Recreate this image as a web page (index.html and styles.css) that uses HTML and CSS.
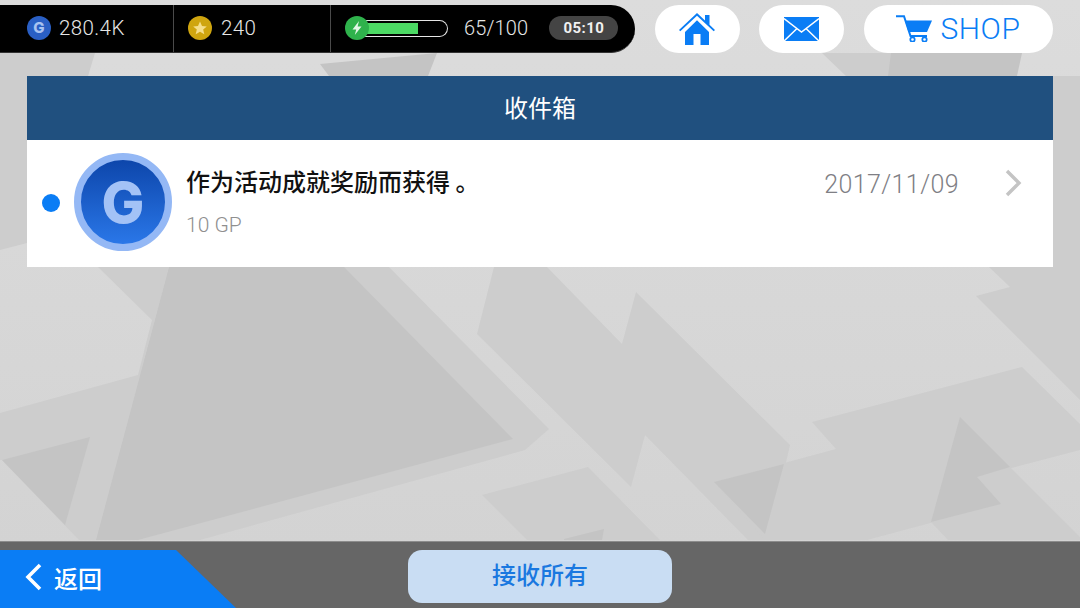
FILE: index.html
```html
<!DOCTYPE html>
<html lang="zh">
<head>
<meta charset="utf-8">
<title>收件箱</title>
<link rel="stylesheet" href="styles.css">
</head>
<body>
<div class="screen">
  <svg class="bg" viewBox="0 0 1080 608" aria-hidden="true">
    <defs>
      <linearGradient id="base" x1="0" y1="0" x2="0" y2="1">
        <stop offset="0" stop-color="#dcdcdc"/>
        <stop offset="1" stop-color="#d2d2d2"/>
      </linearGradient>
    </defs>
    <rect width="1080" height="608" fill="url(#base)"/>
    <g fill="#cdcdcd">
      <polygon points="98,267 169,267 96,540 79,540 2,460 0,460 0,413 138,375 152,320"/>
      <polygon points="389,267 549,429 525,450 200,540 96,540 169,267"/>
      <polygon points="494,267 547,267 622,344 636,292 790,445 768,540 748,540 645,435 631,487 477,334"/>
      <polygon points="482,495 588,467 660,540 527,540"/>
      <polygon points="714,482 836,449 812,422 1022,367 1080,424 1080,450 977,477 1001,504 867,540 765,540"/>
      <polygon points="960,417 1080,537 1080,540 948,540 931,522"/>
      <polygon points="989,267 1080,267 1080,400 976,296 1010,287"/>
      <polygon points="0,53 95,53 88,76 0,76"/>
      <polygon points="822,53 930,53 910,76 846,76"/>
      <polygon points="0,76 27,76 27,243 0,250"/>
      <polygon points="1053,76 1080,76 1080,267 1053,267"/>
    </g>
    <g fill="#c4c4c4">
      <polygon points="169,267 344,267 513,439 138,540 96,540"/>
      <polygon points="2,460 90,437 65,525"/>
      <polygon points="714,482 784,464 765,534"/>
      <polygon points="960,417 1010,467 977,477 1001,504 931,522"/>
      <polygon points="564,539 604,529 602,540 564,540"/>
      <polygon points="320,64 437,53 428,76 329,76"/>
      <polygon points="891,53 1022,53 1017,76 888,76"/>
    </g>
  </svg>

  <header class="topbar">
    <div class="status">
      <div class="cell cell-gold">
        <span class="coin coin-g">G</span>
        <span class="amount">280.4K</span>
      </div>
      <div class="cell cell-star">
        <svg class="coin-svg" viewBox="0 0 24 24" aria-hidden="true">
          <circle cx="12" cy="12" r="12" fill="#cfa50f"/>
          <polygon points="12,5.5 14,10 18.8,10.4 15.2,13.500 16.300,18.300 12,15.800 7.700,18.300 8.800,13.500 5.200,10.400 10,10" fill="#f5de8a"/>
        </svg>
        <span class="amount">240</span>
      </div>
      <div class="cell cell-energy">
        <div class="energy">
          <div class="energy-track"><div class="energy-fill" style="width:67%"></div></div>
          <svg class="bolt" viewBox="0 0 24 24" aria-hidden="true">
            <circle cx="12" cy="12" r="12" fill="#2fb24c"/>
            <polygon points="14,5 7.500,13.500 11.200,13.500 9.800,19 16.500,10.500 12.600,10.500" fill="#e4f7e8"/>
          </svg>
        </div>
        <span class="amount energy-num">65/100</span>
        <span class="timer">05:10</span>
      </div>
    </div>
    <button class="pill pill-icon">
      <svg class="ico-home" viewBox="0 0 36 32" aria-hidden="true">
        <path d="M0 17 18 0l8 7.500V2h4.500v9.800L36 17l-1.300 1.300L18 2.700 1.300 18.300Z" fill="#0a7df5"/>
        <path d="M6 19 18 7.300 30 19v13H21.500V21h-7v11H6Z" fill="#0a7df5"/>
      </svg>
    </button>
    <button class="pill pill-icon">
      <svg class="ico-mail" viewBox="0 0 35 24" aria-hidden="true">
        <rect width="35" height="24" fill="#0a7df5"/>
        <path d="M0 1.500 17.500 15 35 1.500M0 24 13 11.500M35 24 22 11.500" fill="none" stroke="#fff" stroke-width="1.500"/>
      </svg>
    </button>
    <button class="pill pill-shop">
      <svg class="ico-cart" viewBox="0 0 36 27" aria-hidden="true">
        <path d="M0 1.200H8L14.500 21H31" fill="none" stroke="#0a7df5" stroke-width="2"/>
        <path d="M9 5.500H36L31 17H12.500Z" fill="#0a7df5"/>
        <circle cx="16.500" cy="24.500" r="2.200" fill="none" stroke="#0a7df5" stroke-width="1.700"/>
        <circle cx="28.500" cy="24.500" r="2.200" fill="none" stroke="#0a7df5" stroke-width="1.700"/>
      </svg>
      <span>SHOP</span>
    </button>
  </header>

  <main class="inbox">
    <h1 class="inbox-title">收件箱</h1>
    <article class="message">
      <span class="dot"></span>
      <div class="avatar"><span>G</span></div>
      <div class="message-body">
        <p class="message-title">作为活动成就奖励而获得 。</p>
        <p class="message-sub">10 GP</p>
      </div>
      <time class="message-date">2017/11/09</time>
      <svg class="chevron" viewBox="0 0 18 28" aria-hidden="true">
        <path d="M3 2 15 14 3 26" fill="none" stroke="#c4c4c4" stroke-width="3.400"/>
      </svg>
    </article>
  </main>

  <footer class="bottombar">
    <button class="back">
      <svg class="back-arrow" viewBox="0 0 18 28" aria-hidden="true">
        <path d="M15 2 3 14l12 12" fill="none" stroke="#fff" stroke-width="3.600"/>
      </svg>
      <span>返回</span>
    </button>
    <button class="receive">接收所有</button>
  </footer>
</div>
</body>
</html>
```
FILE: styles.css
```css
* { box-sizing: border-box; }
html, body { margin: 0; padding: 0; }
body {
  width: 1080px;
  height: 608px;
  overflow: hidden;
  font-family: "Noto Sans CJK SC", "Liberation Sans", sans-serif;
}
p, h1 { margin: 0; font-weight: normal; }
button { border: 0; padding: 0; font: inherit; }

.screen {
  position: relative;
  width: 1080px;
  height: 608px;
  background: #d6d6d6;
  display: flex;
  flex-direction: column;
}
.bg { position: absolute; inset: 0; width: 1080px; height: 608px; }

.topbar {
  position: relative;
  height: 48px;
  margin-top: 4.500px;
  display: flex;
  align-items: stretch;
}
.status {
  width: 635px;
  background: #000;
  border-radius: 0 24px 24px 0;
  border-bottom: 1px solid #333;
  display: flex;
  color: #e6e6e6;
}
.cell {
  display: flex;
  align-items: center;
  border-right: 1px solid #4a4a4a;
}
.cell-gold { width: 174px; padding-left: 27px; gap: 8px; }
.cell-star { width: 157px; padding-left: 14px; gap: 9px; }
.cell-energy { border-right: 0; padding-left: 14px; }
.amount { font-family: "Roboto", sans-serif; font-size: 20.500px; font-weight: 300; letter-spacing: .4px; }
.coin {
  width: 24px; height: 24px; border-radius: 50%;
  background: #2a5fc4; color: #a9c3f0;
  font: 800 15px/24px "Inter", sans-serif; text-align: center;
}
.coin-svg { width: 24px; height: 24px; }
.energy { position: relative; width: 103px; height: 24px; display: flex; align-items: center; }
.energy-track {
  margin-left: 13px; width: 90px; height: 17px;
  border: 1.500px solid #e6e6e6; border-left: 0;
  border-radius: 0 8.500px 8.500px 0;
  padding: 2px 0;
}
.energy-fill { height: 100%; background: #4cd964; }
.bolt { position: absolute; left: 0; top: 0; width: 24px; height: 24px; }
.energy-num { margin-left: 16px; font-size: 20px; letter-spacing: .15px; }
.timer {
  margin-left: 21px; width: 69px; height: 24px; border-radius: 12px;
  background: #444; color: #f0f0f0;
  font: bold 15px/24px "Roboto", sans-serif; text-align: center; letter-spacing: .4px;
}

.pill {
  background: #fff;
  border-radius: 24px;
  display: flex; align-items: center; justify-content: center;
}
.pill-icon { width: 85px; margin-left: 20px; }
.pill-icon + .pill-icon { margin-left: 19px; }
.pill-shop {
  width: 189px; margin-left: 20px; gap: 8px;
  color: #0a7df5; font-family: "Roboto", sans-serif; font-size: 30px; font-weight: 300; letter-spacing: .6px;
}
.ico-home { width: 36px; height: 32px; margin-right: 1px; }
.ico-mail { width: 35px; height: 24px; }
.ico-cart { width: 36px; height: 27px; }

.inbox {
  position: relative;
  margin: 23.500px 27px 0;
  flex: 1;
}
.inbox-title {
  height: 64px;
  padding-bottom: 3px;
  background: #20507f;
  color: #fff;
  font-size: 24px;
  font-weight: 400;
  line-height: 61px;
  text-align: center;
}
.message {
  height: 127px;
  background: #fff;
  display: flex;
  align-items: flex-start;
}
.dot {
  width: 18px; height: 18px; border-radius: 50%;
  background: #0a7df5;
  margin: 54px 0 0 15px;
}
.avatar {
  width: 98px; height: 98px; border-radius: 50%;
  margin: 13px 0 0 14px;
  border: 7px solid #94b8f5;
  background: linear-gradient(#0d46ab, #2a77e8);
  display: flex; align-items: center; justify-content: center;
  color: #a3c2f6;
  font: 800 57px/1 "Inter", sans-serif;
}
.message-body { margin: 24px 0 0 14px; flex: 1; }
.message-title { font-size: 24px; font-weight: 500; line-height: 34px; color: #111; }
.message-sub { font-family: "Roboto", sans-serif; font-weight: 300; font-size: 21px; line-height: 28px; margin-top: 13px; color: #8f8f8f; }
.message-date {
  margin: 29px 0 0 0;
  font-family: "Roboto", sans-serif; font-weight: 300; font-size: 25px; line-height: 32px; color: #7f7f85; letter-spacing: .4px;
}
.chevron { width: 18px; height: 28px; margin: 29px 31px 0 45px; }

.bottombar {
  position: relative;
  height: 67px;
  background: #666;
  border-top: 1px solid #8c8c8c;
  display: flex;
  align-items: flex-start;
}
.back {
  width: 236px; height: 58px; margin-top: 8px;
  background: #0a7df5; color: #fff;
  clip-path: polygon(0 0, 176px 0, 236px 58px, 0 58px);
  display: flex; align-items: center; gap: 11px;
  padding: 0 0 4px 25px;
  font-size: 24px;
  font-weight: 500;
}
.back-arrow { width: 18px; height: 28px; }
.receive {
  width: 264px; height: 53px; margin: 8px 0 0 172px;
  padding-bottom: 6px;
  border-radius: 14px;
  background: #c9ddf3; color: #1a78e0;
  font-size: 24px;
  font-weight: 500;
}
```
